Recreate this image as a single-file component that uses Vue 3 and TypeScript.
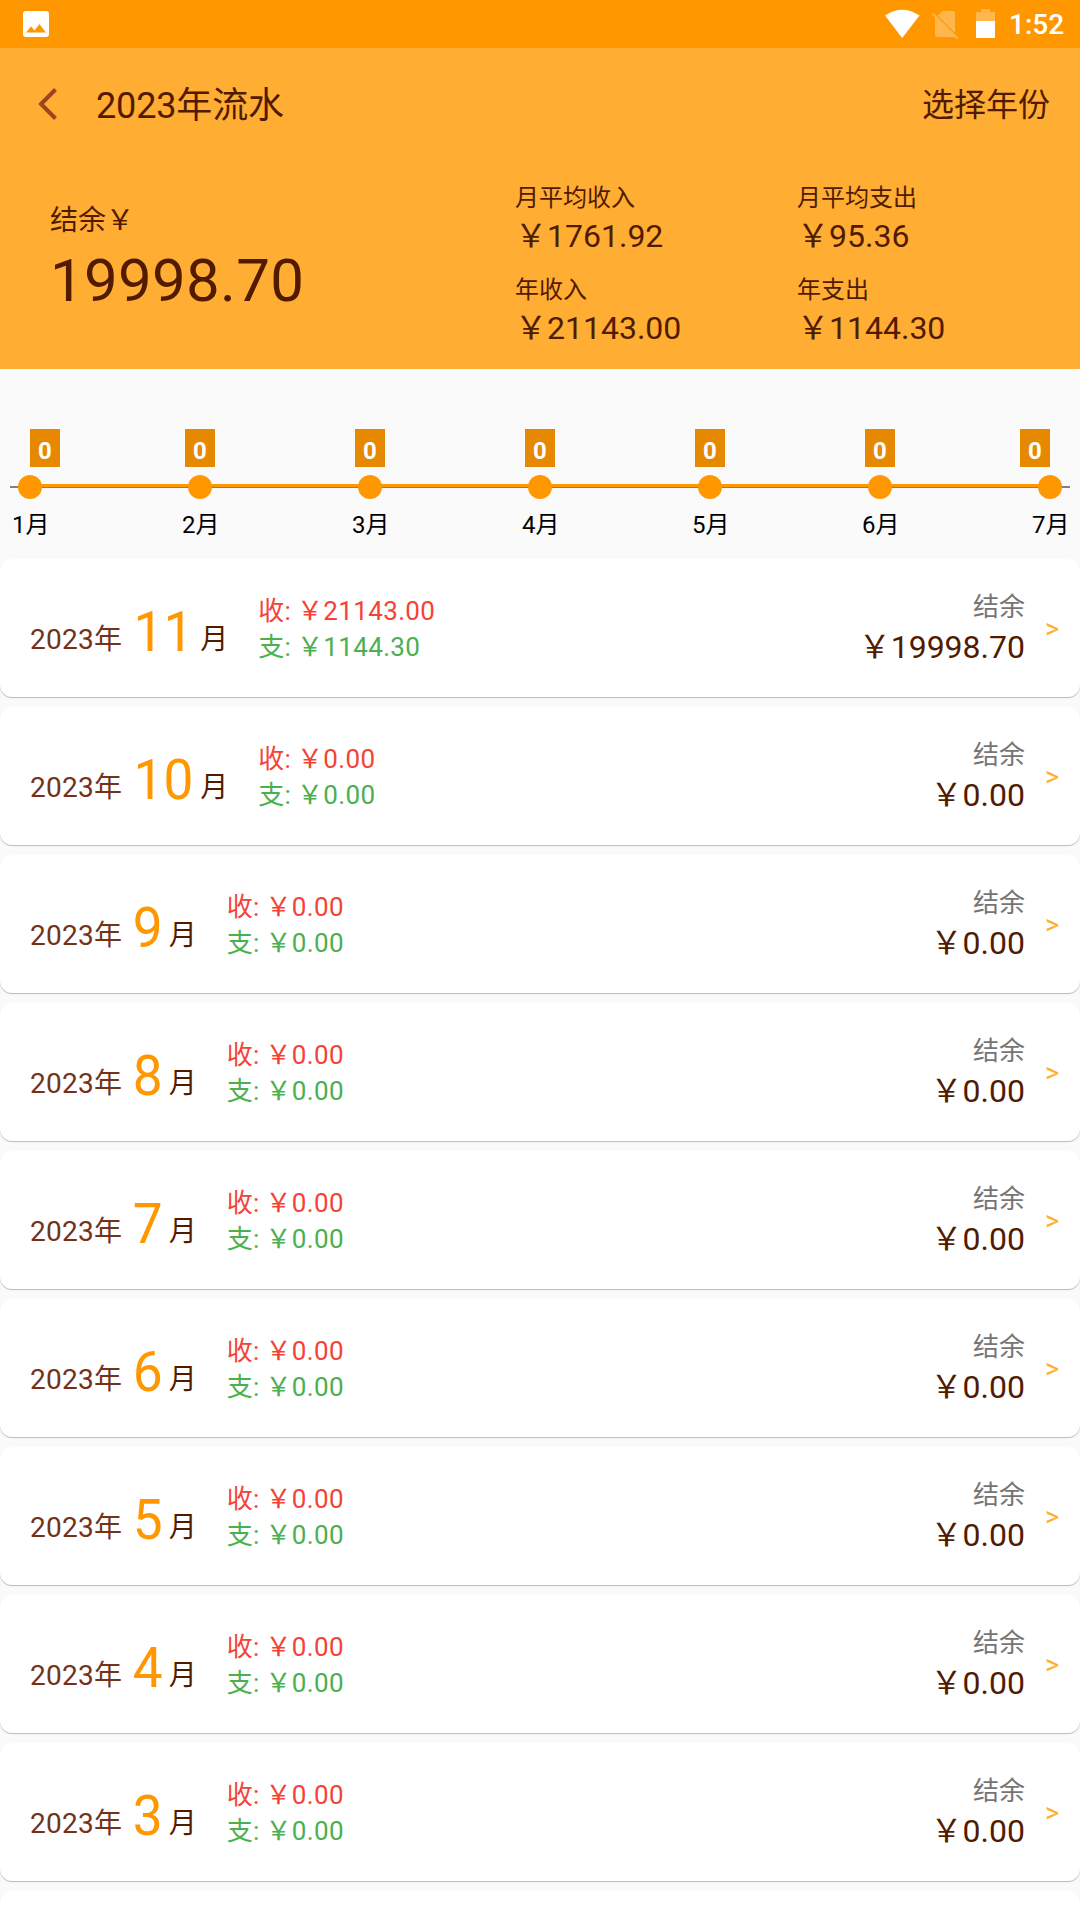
<script setup lang="ts">
interface MonthRow {
  month: number
  income: string
  expense: string
  balance: string
}

const year = 2023

const stats = [
  { label: '月平均收入', value: '1761.92' },
  { label: '月平均支出', value: '95.36' },
  { label: '年收入', value: '21143.00' },
  { label: '年支出', value: '1144.30' },
]

const points = Array.from({ length: 7 }, (_, i) => {
  const x = 30 + i * 170
  return {
    x,
    badgeX: Math.min(Math.max(x - 15, 30), 1020),
    value: 0,
    label: `${i + 1}月`,
  }
})

const rows: MonthRow[] = Array.from({ length: 9 }, (_, i) => {
  const month = 11 - i
  return month === 11
    ? { month, income: '21143.00', expense: '1144.30', balance: '19998.70' }
    : { month, income: '0.00', expense: '0.00', balance: '0.00' }
})
</script>

<template>
  <main class="screen" lang="zh-CN">
    <div class="status">
      <svg class="picture-icon" width="26" height="26" viewBox="0 0 26 26">
        <path
          fill="#fff"
          fill-rule="evenodd"
          d="M3 0h20a3 3 0 0 1 3 3v20a3 3 0 0 1-3 3H3a3 3 0 0 1-3-3V3a3 3 0 0 1 3-3zM3.2 21.5h19.6L16.5 13l-5 6.4L8 15.2z"
        />
      </svg>
      <svg class="signals" width="112" height="32" viewBox="0 0 112 32">
        <path fill="#fff" d="M0 7.5Q17-4 34.500 7.500L17.200 30z" />
        <g opacity=".3">
          <path
            fill="#fff"
            d="M57.500 3H68a2 2 0 0 1 2 2v20L52.800 7.800zM50 8.500L69.500 28a2 2 0 0 1-1.500 1H52a2 2 0 0 1-2-2z"
          />
          <path stroke="#fff" stroke-width="2.200" d="M47.500 5.500L72.500 30.500" />
        </g>
        <path fill="#fff" fill-opacity=".3" d="M91 13V4h5V1h9v3h5v9z" />
        <path fill="#fff" d="M91 13h19v17H91z" />
      </svg>
      <span class="clock">1:52</span>
    </div>

    <header class="header">
      <div class="bar">
        <svg class="back" width="22" height="34" viewBox="0 0 22 34">
          <path fill="none" stroke="#9c4420" stroke-width="4" d="M18.500 2.500L4 17l14.500 14.500" />
        </svg>
        <h1 class="title">{{ year }}年流水</h1>
        <span class="pick">选择年份</span>
      </div>
      <div class="summary">
        <div class="total">
          <div class="total-label">结余￥</div>
          <div class="total-value">19998.70</div>
        </div>
        <div class="stats">
          <div v-for="s in stats" :key="s.label">
            <div class="stat-label">{{ s.label }}</div>
            <div class="stat-value">￥{{ s.value }}</div>
          </div>
        </div>
      </div>
    </header>

    <svg class="chart" width="1080" height="190" viewBox="0 0 1080 190">
      <rect x="10" y="117" width="1060" height="2" fill="#808080" />
      <rect x="30" y="115" width="1020" height="3" fill="#ff9800" />
      <g v-for="p in points" :key="p.x">
        <rect :x="p.badgeX" y="60" width="30" height="38" fill="#e68900" />
        <text class="badge" :x="p.badgeX + 15" y="90">{{ p.value }}</text>
        <circle :cx="p.x" cy="118" r="12" fill="#ff9800" />
        <text class="tick" :x="p.x + 0.8" y="164">{{ p.label }}</text>
      </g>
    </svg>

    <section class="list">
      <article v-for="r in rows" :key="r.month" class="card">
        <span class="year">{{ year }}年</span>
        <span class="month">{{ r.month }}</span>
        <span class="unit">月</span>
        <div class="flow">
          <div class="income">收: ￥{{ r.income }}</div>
          <div class="expense">支: ￥{{ r.expense }}</div>
        </div>
        <div class="balance">
          <div class="balance-label">结余</div>
          <div class="balance-value">￥{{ r.balance }}</div>
        </div>
        <span class="arrow">&gt;</span>
      </article>
      <article class="card" />
    </section>
  </main>
</template>

<style>
body {
  margin: 0;
  background: #fafafa;
}
</style>

<style scoped>
.screen {
  width: 1080px;
  height: 1920px;
  overflow: hidden;
  background: #fafafa;
  color: #521b00;
  font-family: Roboto, "Noto Sans CJK SC", sans-serif;
  white-space: nowrap;
}
.status {
  height: 48px;
  display: flex;
  align-items: center;
  box-sizing: border-box;
  padding: 0 16px 0 23px;
  background: #ff9800;
}
.signals {
  margin-left: auto;
}
.clock {
  margin-left: 12px;
  width: 55px;
  padding-top: 2px;
  color: #fff;
  font-size: 28px;
  font-weight: 500;
  line-height: 50px;
}
.header {
  height: 321px;
  background: #ffad33;
}
.bar {
  height: 116px;
  display: flex;
  align-items: center;
  padding: 0 30px 0 37px;
}
.back {
  margin-top: -4px;
}
.title {
  margin: 0 0 0 37px;
  font-size: 36px;
  font-weight: 400;
  line-height: 48px;
  letter-spacing: -0.15px;
}
.pick {
  margin-left: auto;
  padding-bottom: 2px;
  font-size: 32px;
  line-height: 44px;
}
.summary {
  display: flex;
  padding-left: 50px;
}
.total {
  width: 465px;
  padding-top: 37px;
}
.total-label {
  font-size: 28px;
  line-height: 40px;
}
.total-value {
  font-size: 60px;
  line-height: 80px;
  letter-spacing: 0.3px;
}
.stats {
  display: grid;
  grid-template-columns: 282px 282px;
  row-gap: 16px;
  padding-top: 16px;
}
.stat-label {
  font-size: 24px;
  line-height: 36px;
}
.stat-value {
  font-size: 32px;
  line-height: 40px;
}
.chart {
  display: block;
}
.badge,
.tick {
  font-size: 24px;
  text-anchor: middle;
}
.badge {
  fill: #fff;
  font-weight: 700;
}
.tick {
  fill: #000;
}
.list {
  display: flex;
  flex-direction: column;
  gap: 10px;
}
.card {
  flex: none;
  display: flex;
  align-items: flex-start;
  height: 138px;
  box-sizing: border-box;
  padding: 0 20px 0 30px;
  border-radius: 12px;
  background: #fff;
  box-shadow: 0 1px 1px rgba(0, 0, 0, 0.26);
}
.year,
.unit {
  padding-top: 61px;
  font-size: 28px;
  line-height: 40px;
}
.year {
  color: #753217;
  letter-spacing: 0.25px;
}
.month {
  margin: 0 5px 0 10px;
  padding-top: 40px;
  color: #ff9800;
  font-size: 56px;
  line-height: 66px;
  transform: scaleX(0.95);
}
.flow {
  margin-left: 30px;
  padding-top: 34px;
  font-size: 26px;
  line-height: 36px;
  letter-spacing: 0.35px;
  word-spacing: -1px;
}
.income {
  color: #f44336;
}
.expense {
  color: #4caf50;
}
.balance {
  margin-left: auto;
  padding-top: 28px;
  text-align: right;
  line-height: 40px;
}
.balance-label {
  color: #757575;
  font-size: 26px;
}
.balance-value {
  font-size: 32px;
}
.arrow {
  margin-left: 20px;
  width: 15px;
  color: #ffad33;
  font-size: 27px;
  line-height: 141px;
}
</style>
